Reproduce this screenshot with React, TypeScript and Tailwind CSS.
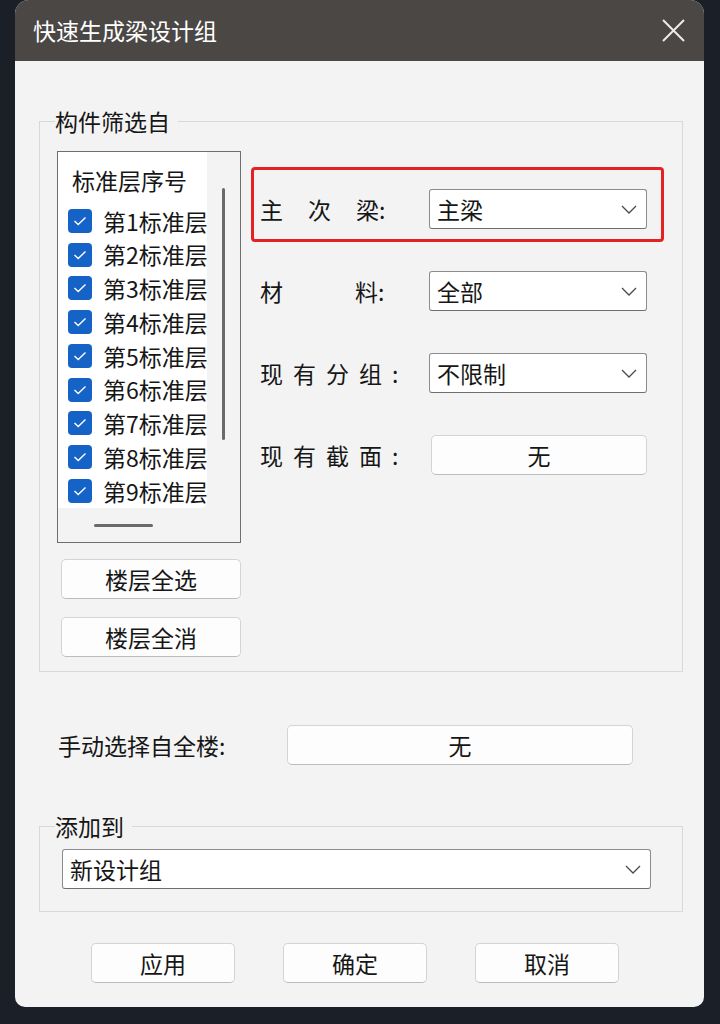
import { type ReactNode } from 'react'

const FLOORS = [1, 2, 3, 4, 5, 6, 7, 8, 9]

function Chevron() {
  return (
    <svg width="16" height="9" viewBox="0 0 16 9" fill="none">
      <path d="M1 1 L8 8 L15 1" stroke="#4a4a4a" strokeWidth="1.3" />
    </svg>
  )
}

function Select({ value, className = '' }: { value: string; className?: string }) {
  return (
    <div
      className={`h-[40px] flex items-center justify-between bg-white border border-[#8c8c8c] border-b-[#6e6e6e] rounded-[3px] pl-[7px] pr-[9px] ${className}`}
    >
      <span>{value}</span>
      <Chevron />
    </div>
  )
}

function Btn({ children, className = '' }: { children: ReactNode; className?: string }) {
  return (
    <div
      className={`h-[40px] flex items-center justify-center bg-[#fdfdfd] border border-[#d4d4d4] border-b-[#bcbcbc] rounded-[5px] ${className}`}
    >
      {children}
    </div>
  )
}

function CheckBox() {
  return (
    <div className="w-[24px] h-[24px] shrink-0 rounded-[4px] bg-[#1663c7] flex items-center justify-center">
      <svg width="14" height="10" viewBox="0 0 14 10" fill="none">
        <path d="M1.5 5 L5.2 8.5 L12.5 1.5" stroke="#ffffff" strokeWidth="1.4" />
      </svg>
    </div>
  )
}

export default function App() {
  return (
    <div className="min-h-[1024px] bg-[#1b1f28] text-[23px] text-[#161616] font-['Noto_Sans_CJK_SC','Noto_Sans_CJK_JP',sans-serif]">
      <div className="ml-[15px] w-[689px] h-[1007px] rounded-t-[14px] rounded-b-[10px] overflow-hidden flex flex-col bg-[#f3f3f3]">
        {/* Title bar */}
        <div className="h-[61px] shrink-0 bg-[#4a4745] flex items-center justify-between pl-[18px] pr-[19px]">
          <span className="text-[23px] text-white">快速生成梁设计组</span>
          <svg width="23" height="23" viewBox="0 0 23 23" fill="none">
            <path d="M1 1 L22 22 M22 1 L1 22" stroke="#ececec" strokeWidth="2" />
          </svg>
        </div>

        <div className="flex-1 pl-[24px] pr-[21px]">
          {/* 构件筛选自 */}
          <fieldset className="mt-[45px] border border-[#d8d8d8] pl-[17px] pr-[18px] pt-[15px] pb-[14px]">
            <legend className="-ml-[2px] pr-[8px] leading-[30px]">构件筛选自</legend>
            <div className="flex gap-[10px]">
              {/* left column */}
              <div className="w-[184px] shrink-0 flex flex-col">
                <div className="h-[392px] border border-[#6e6e6e] flex flex-col bg-[#f3f3f3]">
                  <div className="flex">
                    <div className="w-[149px] h-[356px] bg-white rounded-br-[6px] overflow-hidden pt-[11px]">
                      <div className="pl-[14px] leading-[34px] whitespace-nowrap">标准层序号</div>
                      <div className="mt-[7px]">
                        {FLOORS.map(n => (
                          <div key={n} className="h-[33.75px] flex items-center gap-[11px] pl-[10px] whitespace-nowrap">
                            <CheckBox />
                            <span>第{n}标准层</span>
                          </div>
                        ))}
                      </div>
                    </div>
                    <div className="flex-1 flex justify-center">
                      <div className="mt-[36px] w-[3px] h-[252px] bg-[#6a6a6a] rounded-full" />
                    </div>
                  </div>
                  <div className="flex-1 flex items-center">
                    <div className="ml-[36px] w-[59px] h-[3px] bg-[#6a6a6a] rounded-full" />
                  </div>
                </div>
                <Btn className="mt-[16px] ml-[4px]">楼层全选</Btn>
                <Btn className="mt-[18px] ml-[4px]">楼层全消</Btn>
              </div>

              {/* right column */}
              <div className="flex-1 pt-[16px]">
                <div className="border-[3px] border-[#e52222] rounded-[4px] pl-[6px] pr-[14px] pt-[19px] pb-[10px] flex items-center">
                  <div className="w-[169px] shrink-0 whitespace-nowrap">
                    <span className="tracking-[25px]">主次</span>梁:
                  </div>
                  <Select value="主梁" className="flex-1" />
                </div>
                <div className="mt-[29px] pl-[9px] pr-[17px] flex items-center">
                  <div className="w-[169px] shrink-0 whitespace-nowrap">
                    <span className="mr-[72px]">材</span>料:
                  </div>
                  <Select value="全部" className="flex-1" />
                </div>
                <div className="mt-[42px] pl-[9px] pr-[17px] flex items-center">
                  <div className="w-[169px] shrink-0 whitespace-nowrap">
                    <span className="tracking-[10px]">现有分组</span>:
                  </div>
                  <Select value="不限制" className="flex-1" />
                </div>
                <div className="mt-[42px] pl-[9px] pr-[17px] flex items-center">
                  <div className="w-[171px] shrink-0 whitespace-nowrap">
                    <span className="tracking-[10px]">现有截面</span>:
                  </div>
                  <Btn className="flex-1">无</Btn>
                </div>
              </div>
            </div>
          </fieldset>

          {/* 手动选择自全楼 */}
          <div className="mt-[53px] flex items-center">
            <div className="ml-[19px] w-[229px] shrink-0 whitespace-nowrap">手动选择自全楼:</div>
            <Btn className="w-[346px]">无</Btn>
          </div>

          {/* 添加到 */}
          <fieldset className="mt-[46px] border border-[#d8d8d8] pl-[22px] pr-[31px] pt-[8px] pb-[22px]">
            <legend className="-ml-[7px] pr-[8px] leading-[30px]">添加到</legend>
            <Select value="新设计组" />
          </fieldset>

          {/* bottom buttons */}
          <div className="mt-[31px] pl-[52px] flex gap-[48px]">
            <Btn className="w-[144px]">应用</Btn>
            <Btn className="w-[144px]">确定</Btn>
            <Btn className="w-[144px]">取消</Btn>
          </div>
        </div>
      </div>
    </div>
  )
}
